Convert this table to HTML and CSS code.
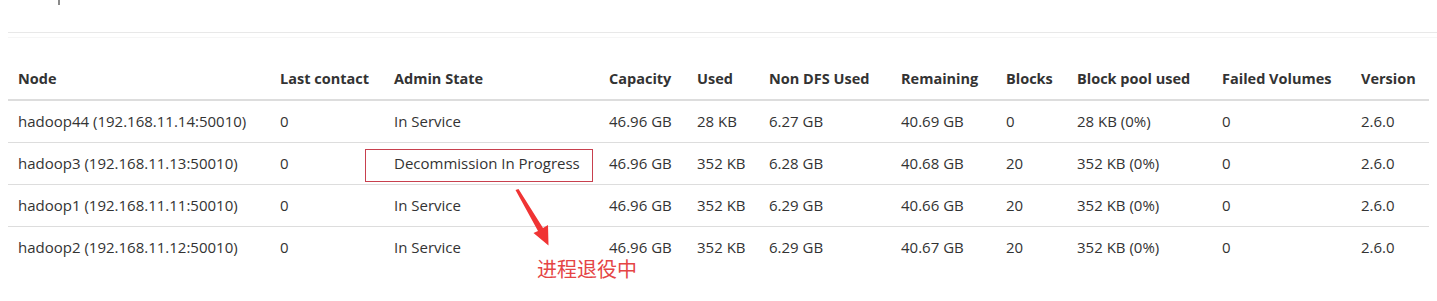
FILE: index.html
```html
<!DOCTYPE html>
<html>
<head>
<meta charset="utf-8">
<link rel="stylesheet" href="styles.css">
</head>
<body>
<div class="page">
  <div class="top"><span class="mark"></span></div>
  <div class="rule"></div>
  <table class="nodes">
    <colgroup>
      <col class="c-node"><col class="c-last"><col class="c-admin"><col class="c-cap"><col class="c-used"><col class="c-nondfs"><col class="c-rem"><col class="c-blocks"><col class="c-bpu"><col class="c-failed"><col class="c-ver">
    </colgroup>
    <thead>
      <tr><th>Node</th><th>Last contact</th><th>Admin State</th><th>Capacity</th><th>Used</th><th>Non DFS Used</th><th>Remaining</th><th>Blocks</th><th>Block pool used</th><th>Failed Volumes</th><th>Version</th></tr>
    </thead>
    <tbody>
      <tr><td>hadoop44 (192.168.11.14:50010)</td><td>0</td><td>In Service</td><td>46.96 GB</td><td>28 KB</td><td>6.27 GB</td><td>40.69 GB</td><td>0</td><td>28 KB (0%)</td><td>0</td><td>2.6.0</td></tr>
      <tr><td>hadoop3 (192.168.11.13:50010)</td><td>0</td><td>Decommission In Progress</td><td>46.96 GB</td><td>352 KB</td><td>6.28 GB</td><td>40.68 GB</td><td>20</td><td>352 KB (0%)</td><td>0</td><td>2.6.0</td></tr>
      <tr><td>hadoop1 (192.168.11.11:50010)</td><td>0</td><td>In Service</td><td>46.96 GB</td><td>352 KB</td><td>6.29 GB</td><td>40.66 GB</td><td>20</td><td>352 KB (0%)</td><td>0</td><td>2.6.0</td></tr>
      <tr><td>hadoop2 (192.168.11.12:50010)</td><td>0</td><td>In Service</td><td>46.96 GB</td><td>352 KB</td><td>6.29 GB</td><td>40.67 GB</td><td>20</td><td>352 KB (0%)</td><td>0</td><td>2.6.0</td></tr>
    </tbody>
  </table>
  <div class="hl-box"></div>
  <svg class="arrow" width="60" height="70" viewBox="500 185 60 70">
    <polygon points="515.5,190 518.5,189 543,228 548,225 548.5,245.5 533.5,233 538,231" fill="#f03434"/>
  </svg>
  <div class="note">进程退役中</div>
</div>
</body>
</html>
```
FILE: styles.css
```css
html, body {
  margin: 0;
  padding: 0;
  background: #fff;
}
body {
  font-family: "Open Sans", "Noto Sans", sans-serif;
  font-size: 15px;
  color: #333;
}
.page {
  position: relative;
  width: 1437px;
  height: 301px;
  overflow: hidden;
}
.top {
  height: 32px;
}
.mark {
  display: block;
  margin-left: 58px;
  width: 2px;
  height: 5px;
  background: #8a8a8a;
}
.rule {
  margin-left: 8px;
  height: 4px;
  border-top: 1px solid #e8e8e8;
  border-bottom: 1px solid #f6f6f6;
}
.nodes {
  margin: 20px 0 0 8px;
  width: 1421px;
  border-collapse: collapse;
  table-layout: fixed;
}
.c-node { width: 262px; }
.c-last { width: 114px; }
.c-admin { width: 215px; }
.c-cap { width: 88px; }
.c-used { width: 72px; }
.c-nondfs { width: 132px; }
.c-rem { width: 105px; }
.c-blocks { width: 71px; }
.c-bpu { width: 145px; }
.c-failed { width: 139px; }
.c-ver { width: 78px; }
.nodes th, .nodes td {
  text-align: left;
  white-space: nowrap;
  padding: 10px 0 10px 10px;
  line-height: 21px;
  overflow: visible;
}
.nodes th {
  font-weight: 700;
  font-size: 14.5px;
  border-bottom: 2px solid #dddddd;
}
.nodes td {
  border-top: 1px solid #dddddd;
}
.nodes tbody tr:first-child td {
  border-top: 0;
}
.hl-box {
  position: absolute;
  left: 365px;
  top: 149px;
  width: 226px;
  height: 31px;
  border: 1px solid #c8404e;
}
.arrow {
  position: absolute;
  left: 500px;
  top: 185px;
}
.note {
  position: absolute;
  left: 537px;
  top: 258px;
  font-family: "Noto Sans CJK SC", sans-serif;
  font-size: 20px;
  line-height: 21px;
  color: #e54545;
}
```
